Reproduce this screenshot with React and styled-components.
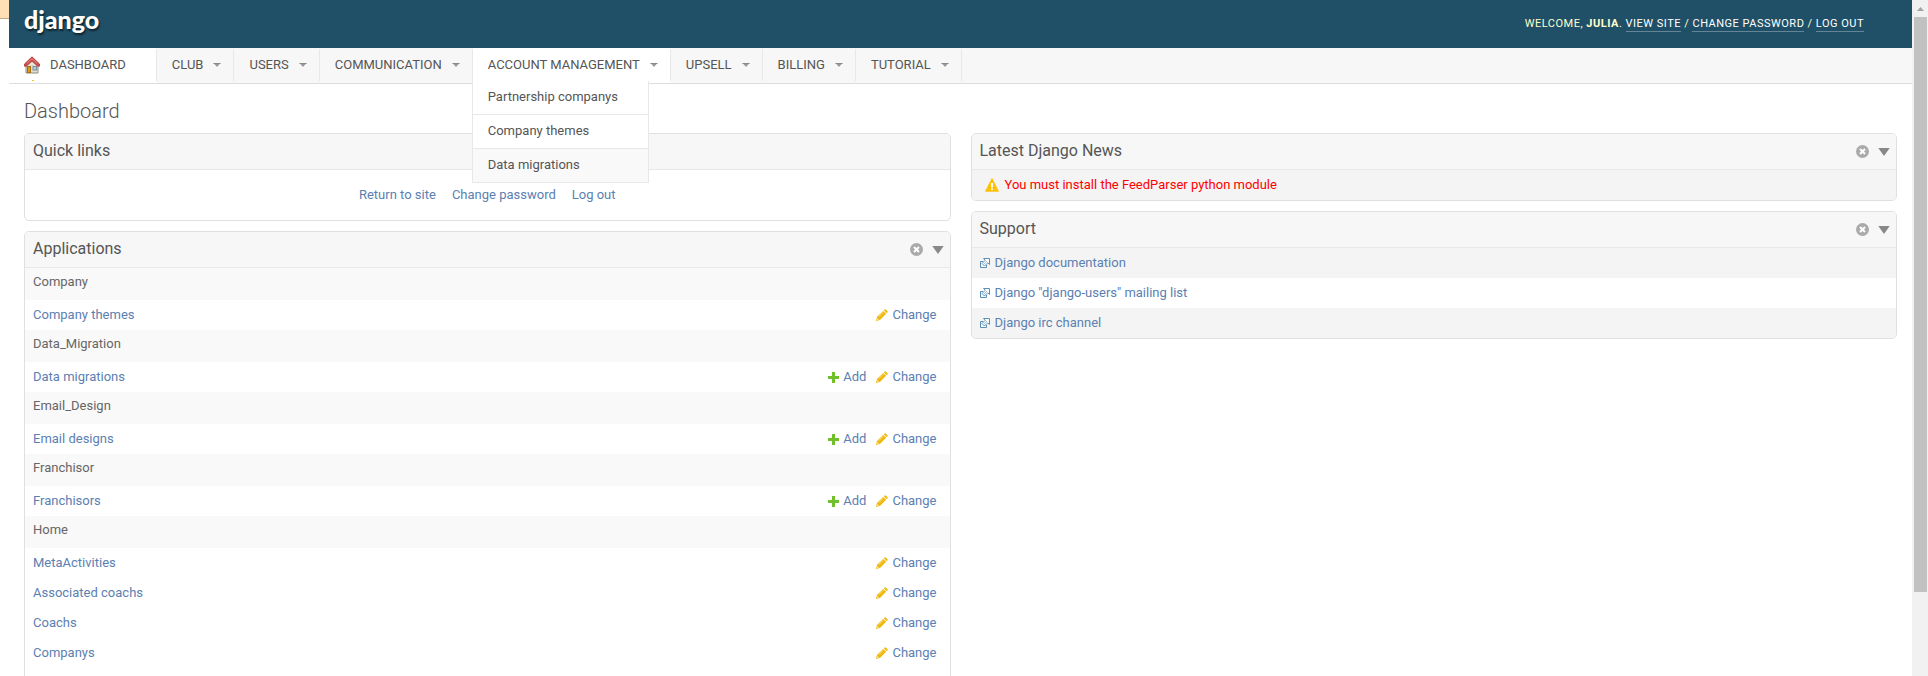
import React from "react";
import styled, { createGlobalStyle } from "styled-components";

const GlobalStyle = createGlobalStyle`
  * { box-sizing: border-box; }
  body {
    margin: 0;
    background: #fff;
    color: #666;
    font: 13px/18px Roboto, "Liberation Sans", sans-serif;
  }
  a { text-decoration: none; color: inherit; }
  button { border: 0; padding: 0; background: none; cursor: pointer; display: flex; }
  ul { list-style: none; margin: 0; padding: 0; }
  h1, h2 { margin: 0; }
  svg { display: block; flex: none; }
`;

const Shell = styled.div`
  display: flex;
  height: 100vh;
  overflow: hidden;
`;

const Gutter = styled.div`
  flex: none;
  width: 9px;
`;

const GutterTab = styled.div`
  height: 19px;
  background: #ffdfb5;
  border-bottom: 1px solid #c9a77c;
`;

const Page = styled.div`
  flex: 1;
  min-width: 0;
`;

const Header = styled.header`
  display: flex;
  justify-content: space-between;
  align-items: flex-start;
  height: 48px;
  padding: 4px 48px 0 15px;
  background: #205067;
`;

const Logo = styled.a`
  font: 900 25px/30px Lato, "Open Sans", sans-serif;
  color: #fff;
  text-shadow: 1px 2px 2px rgba(0, 0, 0, 0.6);
`;

const UserTools = styled.div`
  padding-top: 12px;
  font-size: 11px;
  line-height: 15px;
  letter-spacing: 0.5px;
  text-transform: uppercase;
  color: #ffc;
`;

const ToolLink = styled.a`
  display: inline-block;
  color: #fff;
  border-bottom: 1px solid #638596;
`;

const Nav = styled.nav`
  background: #f7f7f7;
  border-bottom: 1px solid #ddd;
  padding: 1px 0 2px;
`;

const NavList = styled.ul`
  display: flex;
`;

const NavItem = styled.li`
  position: relative;
  border-right: 1px solid #e8e8e8;
  background: ${(p) => (p.$open ? "#fff" : "transparent")};
  box-shadow: ${(p) => (p.$open ? "0 -1px #fff, 0 2px #fff" : "none")};
`;

const NavLink = styled.a`
  display: flex;
  align-items: center;
  gap: 10px;
  height: 32px;
  padding: 0 ${(p) => (p.$home ? 30 : 12)}px 0 15px;
  text-transform: uppercase;
  color: #555;
`;

const Bookmark = styled.span`
  position: absolute;
  left: 23px;
  bottom: 0;
  width: 2px;
  height: 1px;
  background: #f5c21b;
`;

const Menu = styled.ul`
  position: absolute;
  z-index: 2;
  top: 32px;
  left: -1px;
  width: 177px;
  border: solid #e8e8e8;
  border-width: 0 1px;
  background: #fff;
`;

const MenuLink = styled.a`
  display: block;
  padding: 7px 15px 8px;
  border-bottom: 1px solid #e8e8e8;
  background: ${(p) => (p.$hover ? "#f9f9f9" : "#fff")};
  color: #555;
`;

const Main = styled.main`
  padding: 0 15px;
`;

const Title = styled.h1`
  padding: 15px 0 9px;
  font-size: 20px;
  font-weight: 300;
  line-height: 25px;
  color: #555;
`;

const Columns = styled.div`
  display: grid;
  grid-template-columns: 1fr 1fr;
  gap: 20px;
  align-items: start;
`;

const Column = styled.div`
  display: grid;
  gap: 10px;
`;

const Panel = styled.section`
  border: 1px solid #e0e0e0;
  border-radius: 5px;
  overflow: hidden;
`;

const PanelHead = styled.div`
  display: flex;
  align-items: center;
  justify-content: space-between;
  height: 36px;
  padding: 0 6px 0 8px;
  background: #f7f7f7;
  border-bottom: 1px solid #e8e8e8;
`;

const PanelTitle = styled.h2`
  padding-bottom: 2px;
  font-size: 16px;
  font-weight: 400;
  line-height: 20px;
  color: #555;
`;

const PanelTools = styled.div`
  display: flex;
  align-items: center;
  gap: 9px;
`;

const QuickLinks = styled.ul`
  display: flex;
  justify-content: center;
  gap: 16px;
  padding: 16px 0;
  color: #5b80b2;
`;

const AppTable = styled.table`
  width: 100%;
  margin-bottom: 30px;
  border-collapse: collapse;
`;

const GroupHead = styled.th`
  height: 32px;
  padding: 0 8px 4px;
  background: #f9f9f9;
  font-weight: 400;
  text-align: left;
  color: #666;
`;

const Cell = styled.td`
  height: 30px;
  padding: 0 13px 0 8px;
  color: #5b80b2;
`;

const Actions = styled.div`
  display: flex;
  justify-content: flex-end;
  gap: 10px;
`;

const Action = styled.a`
  display: flex;
  align-items: center;
  gap: 4px;
`;

const Row = styled.li`
  display: flex;
  align-items: center;
  gap: 6px;
  height: 30px;
  padding: 0 ${(p) => (p.$warning ? 13 : 8)}px;
  background: #f4f4f4;
  color: ${(p) => (p.$warning ? "#f00" : "#5b80b2")};
  &:nth-child(even) { background: #fff; }
`;

const RowLink = styled.a`
  display: flex;
  align-items: center;
  gap: 5px;
`;

const ScrollTrack = styled.div`
  flex: none;
  display: flex;
  flex-direction: column;
  align-items: center;
  width: 16px;
  background: #f1f1f1;
`;

const ScrollArrow = styled.div`
  padding: 7px 0 6px;
`;

const ScrollThumb = styled.div`
  width: 13px;
  height: 85%;
  background: #c1c1c1;
`;

const HomeIcon = () => (
  <svg width="16" height="18" viewBox="0 0 16 18" aria-hidden="true">
    <path d="M2 9 8 4l6 5v8H2z" fill="#e3ded2" stroke="#8e8b80" />
    <rect x="3.5" y="10.5" width="3" height="6" fill="#d99a1c" stroke="#a9700c" />
    <rect x="9" y="10.500" width="3.500" height="3.500" fill="#b6cde4" stroke="#7e8c98" />
    <path d="M8 .8 15.500 8v2.200L13.500 10 8 5 2.500 10 .5 10.200V8z" fill="#d24b4b" stroke="#a53232" strokeWidth=".8" />
    <path d="M8 2.500 3 7.300M8 2.500l5 4.800" stroke="#ea8a86" fill="none" />
  </svg>
);

const Caret = () => (
  <svg width="8" height="4" viewBox="0 0 8 4" aria-hidden="true">
    <path d="M.5 0h7L4 4z" fill="#999" />
    <path d="M.5 0h7v1h-7z" fill="#8a8a8a" />
  </svg>
);

const CloseIcon = () => (
  <svg width="13" height="13" viewBox="0 0 13 13" aria-hidden="true">
    <circle cx="6.5" cy="6.5" r="6.500" fill="#aaa" />
    <path d="m4 4 5 5M9 4 4 9" stroke="#fff" strokeWidth="2" />
  </svg>
);

const TriangleIcon = () => (
  <svg width="12" height="8" viewBox="0 0 12 8" aria-hidden="true">
    <path d="M.3 0h11.400L6 8z" fill="#888" />
  </svg>
);

const PlusIcon = () => (
  <svg width="11" height="11" viewBox="0 0 11 11" aria-hidden="true">
    <path d="M4 0h3v4h4v3H7v4H4V7H0V4h4z" fill="#70bf2b" />
  </svg>
);

const PencilIcon = () => (
  <svg width="12" height="12" viewBox="0 0 12 12" aria-hidden="true">
    <path d="M7.800 1.300 8.800.4Q9.300 0 9.800.4L11.600 2.200Q12 2.700 11.600 3.200L10.700 4.200z" fill="#efb80b" />
    <path d="m7.200 1.900 2.900 2.900L4.200 10.800 .3 12 0 11.700 1.200 7.800z" fill="#efb80b" />
    <path d="M7.200 3.300 2.800 7.700" stroke="#fbe08a" strokeWidth="1" />
    <path d="m1.600 9.200 1.200 1.200-1.600.5z" fill="#fff" />
  </svg>
);

const WarningIcon = () => (
  <svg width="14" height="14" viewBox="0 0 14 14" aria-hidden="true">
    <path d="M7 .3 13.800 13.500H.2z" fill="#ffc000" stroke="#ffc000" strokeWidth=".4" />
    <path d="M6 5h2v4.500H6zM6 10.500h2v1.500H6z" fill="#fff" />
  </svg>
);

const ExternalIcon = () => (
  <svg width="10" height="10" viewBox="0 0 10 10" aria-hidden="true">
    <path d="M3 3.500H.5v6h6V7" fill="#fff" stroke="#5b8fb5" />
    <path d="M3.500.5h6v6L7.700 4.800 4.500 8 2 5.500 5.200 2.300z" fill="#fff" stroke="#5b8fb5" />
    <path d="M4 6 7 3" stroke="#5b8fb5" strokeWidth=".8" strokeDasharray="1 .6" />
  </svg>
);

const navItems = [
  { label: "Club" },
  { label: "Users" },
  { label: "Communication" },
  { label: "Account Management", menu: ["Partnership companys", "Company themes", "Data migrations"] },
  { label: "Upsell" },
  { label: "Billing" },
  { label: "Tutorial" },
];

const apps = [
  { name: "Company", models: [{ name: "Company themes" }] },
  { name: "Data_Migration", models: [{ name: "Data migrations", add: true }] },
  { name: "Email_Design", models: [{ name: "Email designs", add: true }] },
  { name: "Franchisor", models: [{ name: "Franchisors", add: true }] },
  {
    name: "Home",
    models: [{ name: "MetaActivities" }, { name: "Associated coachs" }, { name: "Coachs" }, { name: "Companys" }],
  },
];

const supportLinks = ["Django documentation", 'Django "django-users" mailing list', "Django irc channel"];

function Module({ title, tools = true, children }) {
  return (
    <Panel>
      <PanelHead>
        <PanelTitle>{title}</PanelTitle>
        {tools && (
          <PanelTools>
            <button type="button" aria-label={`Close ${title}`}><CloseIcon /></button>
            <button type="button" aria-label={`Collapse ${title}`}><TriangleIcon /></button>
          </PanelTools>
        )}
      </PanelHead>
      {children}
    </Panel>
  );
}

export default function App() {
  return (
    <>
      <GlobalStyle />
      <Shell>
        <Gutter><GutterTab /></Gutter>
        <Page>
          <Header>
            <Logo href="#">django</Logo>
            <UserTools>
              Welcome, <strong>Julia</strong>. <ToolLink href="#">View site</ToolLink> /{" "}
              <ToolLink href="#">Change password</ToolLink> / <ToolLink href="#">Log out</ToolLink>
            </UserTools>
          </Header>
          <Nav>
            <NavList>
              <NavItem $open>
                <NavLink href="#" $home><HomeIcon />Dashboard</NavLink>
                <Bookmark />
              </NavItem>
              {navItems.map((item) => (
                <NavItem key={item.label} $open={Boolean(item.menu)}>
                  <NavLink href="#">{item.label}<Caret /></NavLink>
                  {item.menu && (
                    <Menu>
                      {item.menu.map((entry, i) => (
                        <li key={entry}><MenuLink href="#" $hover={i === item.menu.length - 1}>{entry}</MenuLink></li>
                      ))}
                    </Menu>
                  )}
                </NavItem>
              ))}
            </NavList>
          </Nav>
          <Main>
            <Title>Dashboard</Title>
            <Columns>
              <Column>
                <Module title="Quick links" tools={false}>
                  <QuickLinks>
                    <li><a href="#">Return to site</a></li>
                    <li><a href="#">Change password</a></li>
                    <li><a href="#">Log out</a></li>
                  </QuickLinks>
                </Module>
                <Module title="Applications">
                  <AppTable>
                    {apps.map((app) => (
                      <tbody key={app.name}>
                        <tr><GroupHead colSpan={2} scope="colgroup">{app.name}</GroupHead></tr>
                        {app.models.map((model) => (
                          <tr key={model.name}>
                            <Cell><a href="#">{model.name}</a></Cell>
                            <Cell>
                              <Actions>
                                {model.add && <Action href="#"><PlusIcon />Add</Action>}
                                <Action href="#"><PencilIcon />Change</Action>
                              </Actions>
                            </Cell>
                          </tr>
                        ))}
                      </tbody>
                    ))}
                  </AppTable>
                </Module>
              </Column>
              <Column>
                <Module title="Latest Django News">
                  <ul>
                    <Row $warning><WarningIcon />You must install the FeedParser python module</Row>
                  </ul>
                </Module>
                <Module title="Support">
                  <ul>
                    {supportLinks.map((label) => (
                      <Row key={label}><RowLink href="#"><ExternalIcon />{label}</RowLink></Row>
                    ))}
                  </ul>
                </Module>
              </Column>
            </Columns>
          </Main>
        </Page>
        <ScrollTrack>
          <ScrollArrow>
            <svg width="7" height="4" viewBox="0 0 7 4" aria-hidden="true"><path d="M3.500 0 7 4H0z" fill="#a3a3a3" /></svg>
          </ScrollArrow>
          <ScrollThumb />
        </ScrollTrack>
      </Shell>
    </>
  );
}
